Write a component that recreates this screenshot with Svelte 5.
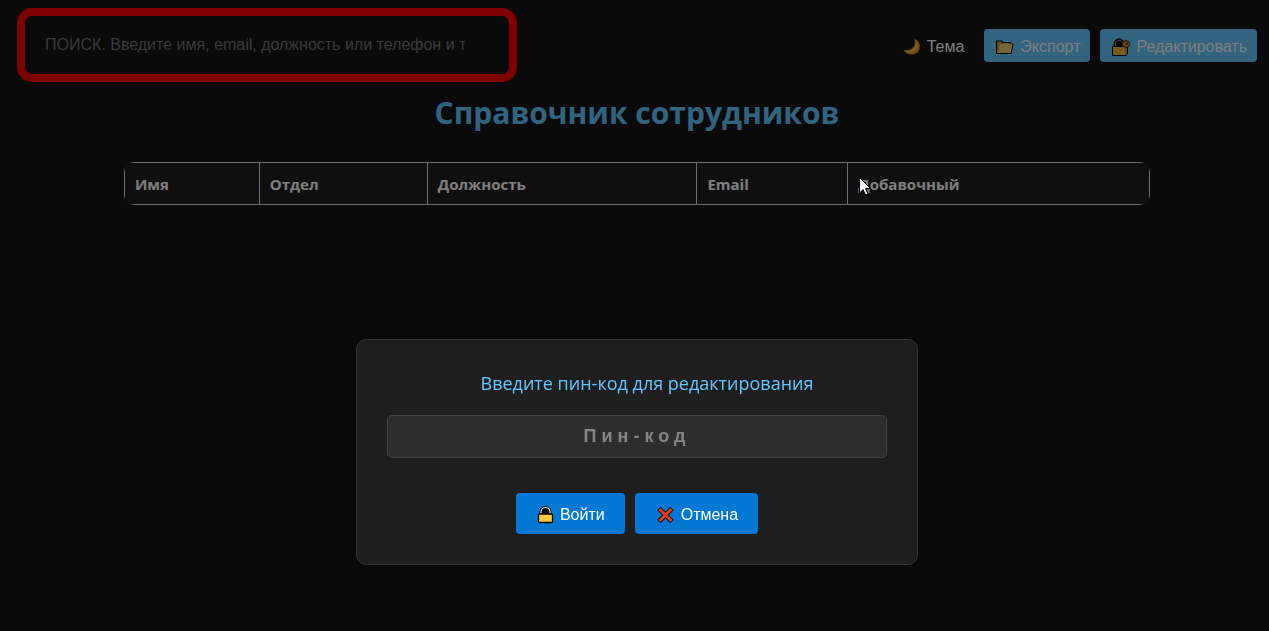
<script>
  const columns = [
    { title: 'Имя', share: 135 },
    { title: 'Отдел', share: 168 },
    { title: 'Должность', share: 270 },
    { title: 'Email', share: 151 },
    { title: 'Добавочный', share: 302 }
  ];
  const total = columns.reduce((sum, column) => sum + column.share, 0);
  let query = $state('');
  let pin = $state('');
  let open = $state(true);
</script>

<div class="page">
  <header>
    <input
      class="search"
      type="text"
      aria-label="Поиск"
      placeholder="ПОИСК. Введите имя, email, должность или телефон и та"
      bind:value={query}
    />
    <nav>
      <button class="tool plain" type="button">
        <svg class="icon" viewBox="0 0 18 18" aria-hidden="true">
          <path d="M11 0.500C18 2.500 19 11 14 15C9.500 18 3 17 0 11.500C4.500 12.500 8.500 11.500 10.500 8.500C12 6 12 3 11 0.500Z" fill="#dc9e24" stroke="#201a10" stroke-width="0.600" />
          <path d="M3.500 13.500C9 14.500 13.500 11.500 14 5.500" fill="none" stroke="#ffc640" stroke-width="1.500" />
        </svg>
        Тема
      </button>
      <button class="tool" type="button">
        <svg class="icon" viewBox="0 0 18 18" aria-hidden="true">
          <path d="M0.500 3H5L7 4.500H14V6H17L15 15.500H0.500Z" fill="#d69b24" stroke="#000" stroke-width="1.200" stroke-linejoin="round" />
          <path d="M3 6H16.500L14.500 15H1.500Z" fill="#f1ce7b" />
          <path d="M2 14L3.500 6" stroke="#c28c28" stroke-width="0.800" />
        </svg>
        Экспорт
      </button>
      <button class="tool" type="button">
        <svg class="icon" viewBox="0 0 18 18" aria-hidden="true">
          <path d="M2 9V6C2 -1 12 -1 12 6V9Z" fill="#000" stroke="#111" />
          <path d="M3.500 8V6C3.500 1 10.500 1 10.500 6V8" fill="none" stroke="#999" />
          <path d="M0.500 8.500H15.500V15.500L14 17.500H0.500Z" fill="#edb93b" stroke="#000" />
          <path d="M13 9V16.500L15 15.500V9.500Z" fill="#d58d1c" />
          <circle cx="14" cy="6" r="3.500" fill="#d58d1c" stroke="#241806" stroke-width="0.800" />
          <circle cx="15" cy="5.500" r="1" fill="#201000" />
        </svg>
        Редактировать
      </button>
    </nav>
  </header>

  <main>
    <h1>Справочник сотрудников</h1>
    <div class="frame">
      <table>
        <thead>
          <tr>
            {#each columns as column}
              <th scope="col" style:width="{(column.share / total) * 100}%">{column.title}</th>
            {/each}
          </tr>
        </thead>
      </table>
    </div>
  </main>
</div>

{#if open}
  <div class="overlay">
    <form class="dialog" role="dialog" aria-labelledby="pin-label" onsubmit={(event) => event.preventDefault()}>
      <label id="pin-label" for="pin">Введите пин-код для редактирования</label>
      <input id="pin" class="pin" type="text" placeholder="Пин-код" bind:value={pin} />
      <div class="actions">
        <button class="action" type="submit">
          <svg class="icon" viewBox="0 0 18 18" aria-hidden="true">
            <path d="M4 8V6C4 -1.500 15 -1.500 15 6V8Z" fill="#000" stroke="#111" />
            <path d="M5 7.500V6C5 0 14 0 14 6V7.500" fill="none" stroke="#ddd" stroke-width="1.200" />
            <rect x="2.500" y="8" width="14" height="8.500" rx="1" fill="#ffc83d" stroke="#000" stroke-width="1.300" />
          </svg>
          Войти
        </button>
        <button class="action wide" type="button" onclick={() => (open = false)}>
          <svg class="icon" viewBox="0 0 18 18" aria-hidden="true">
            <path d="M2 2.500L15 15.500M15 2.500L2 15.500" stroke="#111" stroke-width="4.800" />
            <path d="M2.500 3L14.500 15M14.500 3L2.500 15" stroke="#f03a17" stroke-width="2.800" />
          </svg>
          Отмена
        </button>
      </div>
    </form>
  </div>
{/if}

<svg class="pointer" viewBox="0 0 12 19" aria-hidden="true">
  <path d="M0.500 0.500V16L4 12.500L6.500 18L9 17L6.500 11.500H11.500Z" fill="#fff" stroke="#000" />
</svg>

<style>
  :global(body) {
    margin: 0;
    background: #141414;
    font-family: "Open Sans", "Noto Sans", sans-serif;
  }

  * {
    box-sizing: border-box;
  }

  .page {
    padding: 8px 12px 0 17px;
  }

  header {
    display: flex;
    align-items: center;
    justify-content: space-between;
    gap: 20px;
  }

  input,
  button {
    font-family: "Liberation Sans", Arial, sans-serif;
  }

  .search {
    width: 500px;
    height: 74px;
    padding: 0 44px 0 20px;
    border: 8px solid #ff0000;
    border-radius: 15px;
    background: #141414;
    color: #fff;
    font-size: 16px;
  }

  .search::placeholder {
    color: #757575;
    opacity: 1;
  }

  nav {
    display: flex;
    gap: 10px;
  }

  button {
    display: flex;
    align-items: center;
    gap: 6px;
    border: 0;
    border-radius: 4px;
    color: #fff;
    font-size: 16px;
    white-space: nowrap;
    cursor: pointer;
  }

  .icon {
    flex: none;
    width: 18px;
    height: 18px;
  }

  .tool {
    height: 33px;
    padding: 3px 10px 0 12px;
    background: #64c8ff;
  }

  .tool.plain {
    background: transparent;
  }

  h1 {
    margin: 8px 0 26px;
    color: #64c8ff;
    font-size: 30px;
    line-height: 46px;
    text-align: center;
  }

  .frame {
    margin: 0 107px;
    overflow: hidden;
    border-radius: 10px;
  }

  table {
    width: 100%;
    table-layout: fixed;
    border-collapse: collapse;
  }

  th {
    height: 42px;
    padding: 0 10px;
    border: 1px solid #e0e0e0;
    background: #1e1e1e;
    color: #fff;
    font-size: 15px;
    line-height: 22px;
    text-align: left;
  }

  .overlay {
    position: fixed;
    inset: 0;
    display: flex;
    align-items: flex-start;
    justify-content: center;
    padding: 339px 12px 0 17px;
    background: rgba(0, 0, 0, 0.5);
  }

  .dialog {
    display: flex;
    flex-direction: column;
    width: 562px;
    padding: 30px;
    border: 1px solid #333;
    border-radius: 10px;
    background: #1e1e1e;
    box-shadow: 0 4px 12px rgba(0, 0, 0, 0.3);
  }

  label {
    margin-bottom: 19px;
    padding-left: 20px;
    color: #64c8ff;
    font-size: 18px;
    line-height: 26px;
    text-align: center;
  }

  .pin {
    width: 100%;
    height: 43px;
    padding: 0 10px;
    border: 1px solid #444;
    border-radius: 5px;
    background: #2d2d2d;
    color: #fff;
    font-size: 18px;
    font-weight: bold;
    letter-spacing: 5px;
    text-align: center;
  }

  .pin::placeholder {
    color: #858585;
    opacity: 1;
  }

  .actions {
    display: flex;
    justify-content: center;
    gap: 10px;
    margin-top: 35px;
  }

  .action {
    height: 41px;
    padding: 2px 20px 0;
    background: #0078d4;
  }

  .action.wide {
    padding-left: 22px;
  }

  .pointer {
    position: absolute;
    top: 177px;
    left: 859px;
    width: 12px;
    height: 19px;
    pointer-events: none;
  }
</style>
